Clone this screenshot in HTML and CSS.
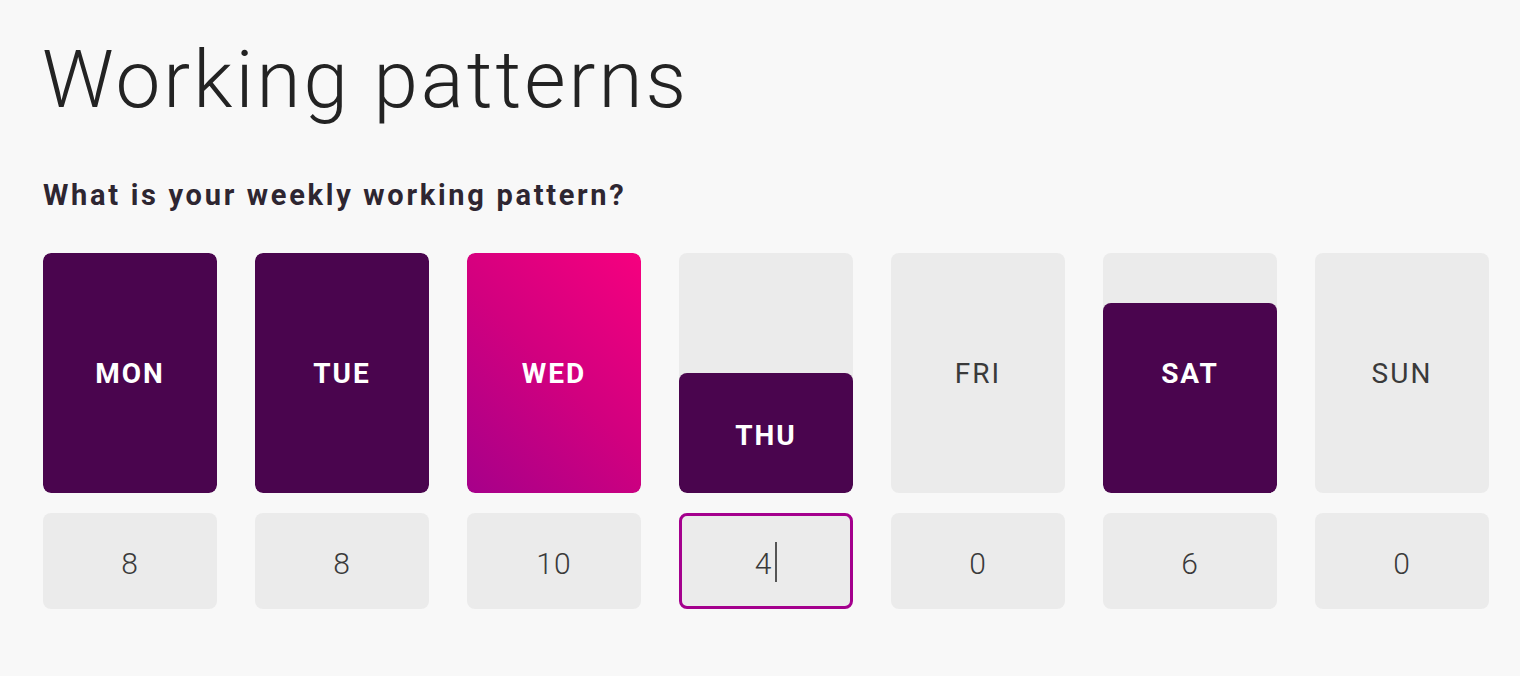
FILE: index.html
```html
<!DOCTYPE html>
<html lang="en">
<head>
<meta charset="utf-8">
<title>Working patterns</title>
<link rel="stylesheet" href="styles.css">
</head>
<body>
<main class="page">
  <h1 class="title">Working patterns</h1>
  <h2 class="question">What is your weekly working pattern?</h2>
  <div class="week">
    <div class="day">
      <div class="bar">
        <div class="fill" style="height:240px"></div>
        <span class="label on">MON</span>
      </div>
      <div class="hours">8</div>
    </div>
    <div class="day">
      <div class="bar">
        <div class="fill" style="height:240px"></div>
        <span class="label on">TUE</span>
      </div>
      <div class="hours">8</div>
    </div>
    <div class="day">
      <div class="bar">
        <div class="fill hot" style="height:240px"></div>
        <span class="label on">WED</span>
      </div>
      <div class="hours">10</div>
    </div>
    <div class="day">
      <div class="bar">
        <div class="fill centered" style="height:120px"><span class="label on low">THU</span></div>
      </div>
      <div class="hours focus"><span>4</span><span class="caret"></span></div>
    </div>
    <div class="day">
      <div class="bar">
        <span class="label">FRI</span>
      </div>
      <div class="hours">0</div>
    </div>
    <div class="day">
      <div class="bar">
        <div class="fill" style="height:190px"></div>
        <span class="label on">SAT</span>
      </div>
      <div class="hours">6</div>
    </div>
    <div class="day">
      <div class="bar">
        <span class="label">SUN</span>
      </div>
      <div class="hours">0</div>
    </div>
  </div>
</main>
</body>
</html>
```
FILE: styles.css
```css
html, body {
  margin: 0;
  background: #f8f8f8;
}
body {
  font-family: Roboto, "Noto Sans", sans-serif;
  color: #262626;
}
.page {
  padding: 30px 31px 0 43px;
}
.title {
  margin: 0 0 0 -1px;
  font-size: 80px;
  font-weight: 300;
  line-height: 100px;
  letter-spacing: 3px;
  color: #232323;
}
.question {
  margin: 48px 0 0;
  font-size: 29px;
  font-weight: 700;
  line-height: 34px;
  letter-spacing: 2.7px;
  color: #2e2631;
}
.week {
  margin-top: 41px;
  display: flex;
  gap: 38px;
}
.day {
  width: 174px;
  display: flex;
  flex-direction: column;
  gap: 20px;
}
.bar {
  height: 240px;
  background: #ebebeb;
  border-radius: 8px;
  display: grid;
  overflow: hidden;
}
.fill {
  grid-area: 1 / 1;
  align-self: end;
  background: #4a054e;
  border-radius: 8px;
}
.fill.hot {
  background: linear-gradient(225deg, #f6007f 0%, #d1007f 50%, #a6008a 100%);
}
.fill.centered {
  display: flex;
  align-items: center;
  justify-content: center;
}
.label {
  grid-area: 1 / 1;
  align-self: center;
  justify-self: center;
  margin-top: 2px;
  font-size: 28px;
  font-weight: 400;
  letter-spacing: 2px;
  color: #3a3a3a;
  line-height: 1;
  z-index: 1;
}
.label.on {
  color: #ffffff;
  font-weight: 700;
}
.label.low {
  margin-top: 6px;
}
.hours {
  height: 96px;
  box-sizing: border-box;
  padding-top: 5px;
  background: #ebebeb;
  border-radius: 8px;
  display: flex;
  align-items: center;
  justify-content: center;
  font-size: 30px;
  font-weight: 300;
  letter-spacing: 1px;
  color: #3a3a3a;
}
.hours.focus {
  border: 3px solid #a4008d;
}
.caret {
  display: inline-block;
  width: 2px;
  height: 40px;
  background: #555;
  margin-left: 3px;
  margin-top: -4px;
}
```
